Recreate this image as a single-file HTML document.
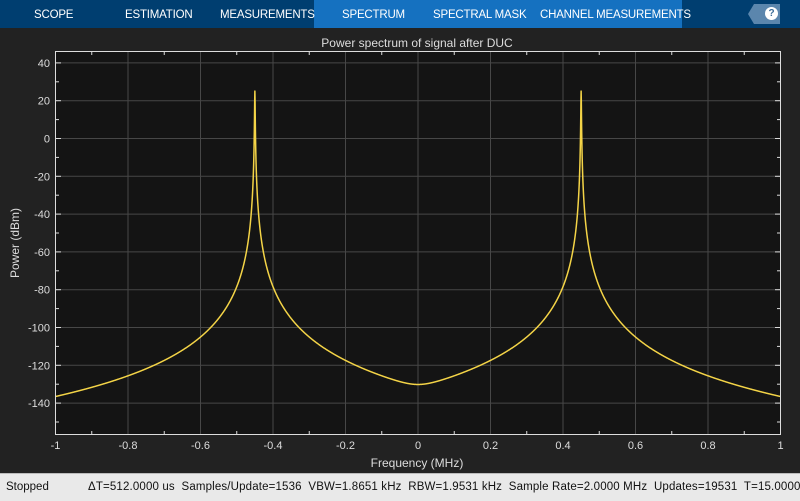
<!DOCTYPE html>
<html><head><meta charset="utf-8"><style>
body{margin:0;width:800px;height:500px;overflow:hidden;background:#222;font-family:"Liberation Sans",sans-serif;position:relative}
#tabs{position:absolute;left:0;top:0;width:800px;height:28px;background:#003e70}
.t{position:absolute;top:0;height:28px;line-height:30px;color:#fff;font-size:11.5px;letter-spacing:-0.2px}
#act{position:absolute;left:314px;top:0;width:368px;height:28px;background:#1571c0}
#help{position:absolute;left:748px;top:4px;width:32px;height:20px;background:#5b86ad;clip-path:polygon(6px 0,100% 0,100% 100%,6px 100%,0 50%)}
#hc{position:absolute;left:765px;top:7px;width:13px;height:13px;border-radius:50%;background:#fff;color:#3c6d99;font-size:10px;font-weight:bold;text-align:center;line-height:13px}
#status{position:absolute;left:0;top:473px;width:800px;height:27px;background:#e9e9e9;border-top:1px solid #bbb;font-size:11.5px;color:#111;line-height:27px;white-space:nowrap}
</style></head><body>
<div id="tabs">
<div id="act"></div>
<div class="t" style="left:34px">SCOPE</div>
<div class="t" style="left:125px">ESTIMATION</div>
<div class="t" style="left:220px">MEASUREMENTS</div>
<div class="t" style="left:342px">SPECTRUM</div>
<div class="t" style="left:433px">SPECTRAL MASK</div>
<div class="t" style="left:540px">CHANNEL MEASUREMENTS</div>
<div id="help"></div><div id="hc">?</div>
</div>
<svg id="s" width="800" height="473" style="position:absolute;left:0;top:0" font-family="Liberation Sans, sans-serif">
<text x="417" y="47" fill="#ddd" font-size="12" text-anchor="middle">Power spectrum of signal after DUC</text>
<rect x="55.5" y="51.5" width="725" height="383" fill="#141414"/>
<g id="g"></g>
<rect x="55.5" y="51.5" width="725" height="383" fill="none" stroke="#ddd" stroke-width="1"/>
<text x="417" y="467" fill="#ddd" font-size="12" text-anchor="middle">Frequency (MHz)</text>
<text transform="translate(19,243) rotate(-90)" fill="#ddd" font-size="12" text-anchor="middle">Power (dBm)</text>
</svg>
<div id="status"><span style="position:absolute;left:6px">Stopped</span><span style="position:absolute;left:88px;letter-spacing:0.15px">ΔT=512.0000 us&nbsp; Samples/Update=1536&nbsp; VBW=1.8651 kHz&nbsp; RBW=1.9531 kHz&nbsp; Sample Rate=2.0000 MHz&nbsp; Updates=19531&nbsp; T=15.0000</span></div>
<script>
var g=document.getElementById('g'),h='';
function X(f){return 55.5+(f+1)*362.5}
function Y(p){return 138.5-p*1.89}
for(var i=-10;i<=10;i+=2){var x=X(i/10);
 if(i>-10&&i<10)h+='<line x1="'+x+'" y1="52" x2="'+x+'" y2="434" stroke="#474747"/>';
 h+='<text x="'+x+'" y="449" fill="#ddd" font-size="11" text-anchor="middle">'+(i==0?'0':(i%10==0?i/10:(i/10).toFixed(1)))+'</text>';}
for(var i=-9;i<=9;i+=2){var x=X(i/10);h+='<line x1="'+x+'" y1="52" x2="'+x+'" y2="55" stroke="#ddd"/><line x1="'+x+'" y1="431" x2="'+x+'" y2="434" stroke="#ddd"/>';}
for(var p=40;p>=-140;p-=20){var y=Y(p);
 h+='<line x1="56" y1="'+y+'" x2="780" y2="'+y+'" stroke="#474747"/><line x1="56" y1="'+y+'" x2="61" y2="'+y+'" stroke="#ddd"/><line x1="775" y1="'+y+'" x2="780" y2="'+y+'" stroke="#ddd"/>';
 h+='<text x="50" y="'+(y+4)+'" fill="#ddd" font-size="11" text-anchor="end">'+p+'</text>';
 var y2=Y(p-10);if(y2<434)h+='<line x1="56" y1="'+y2+'" x2="59" y2="'+y2+'" stroke="#ddd"/><line x1="777" y1="'+y2+'" x2="780" y2="'+y2+'" stroke="#ddd"/>';}
function P(f){var s=0;[-0.45,0.45].forEach(function(c){var d=Math.sqrt((f-c)*(f-c)+0.0007*0.0007);var l=Math.pow(10,(-151-55.8*Math.log10(d))/10);s+=l*l;});return 10*Math.log10(Math.sqrt(s))}
var pts=[];
for(var f=-1;f<=1.00001;f+=0.0005){pts.push([f,P(f)]);}
pts.push([-0.45,P(-0.45)],[0.45,P(0.45)]);pts.sort(function(a,b){return a[0]-b[0]});
var d='';pts.forEach(function(q,k){d+=(k?'L':'M')+X(q[0]).toFixed(2)+' '+Y(Math.min(26,q[1])).toFixed(2)});
h+='<path d="'+d+'" fill="none" stroke="#f4d447" stroke-width="1.5" stroke-linejoin="round"/>';
g.innerHTML=h;
</script>
</body></html>
